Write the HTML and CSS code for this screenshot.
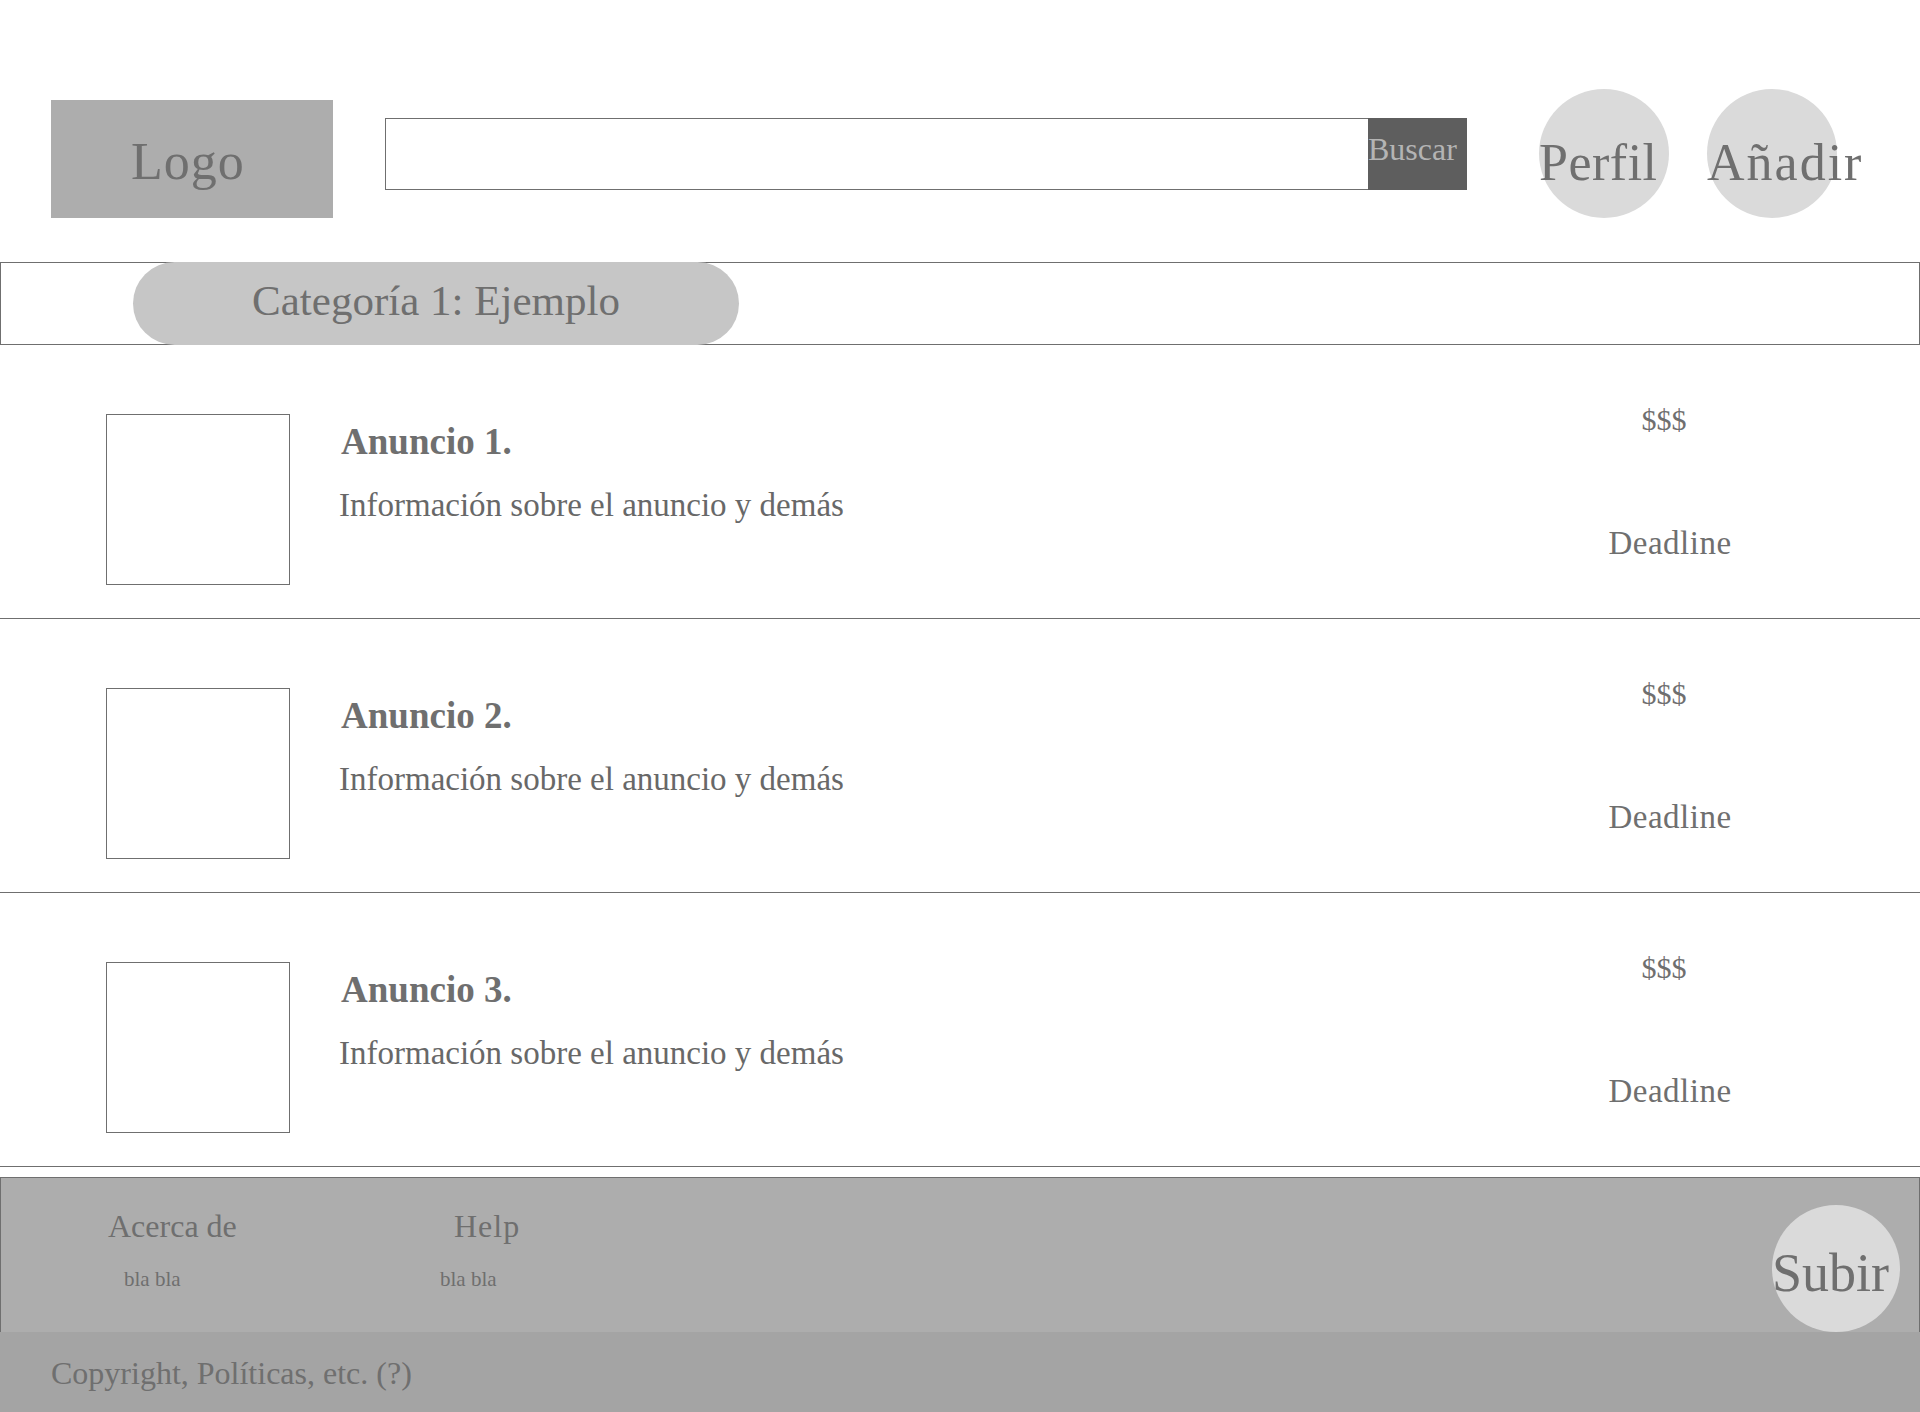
FILE: index.html
```html
<!DOCTYPE html>
<html lang="es">
<head>
<meta charset="utf-8">
<title>Anuncios</title>
<link rel="stylesheet" href="styles.css">
</head>
<body>
<header class="header">
  <div class="logo">Logo</div>
  <form class="search">
    <div class="search-field"></div>
    <div class="search-btn">Buscar</div>
  </form>
  <div class="round round-perfil"><span>Perfil</span></div>
  <div class="round round-add"><span>Añadir</span></div>
</header>

<nav class="catbar">
  <div class="cat-pill">Categoría 1: Ejemplo</div>
</nav>

<main class="list">
  <div class="item">
    <div class="thumb"></div>
    <div class="info">
      <div class="title">Anuncio 1.</div>
      <div class="desc">Información sobre el anuncio y demás</div>
    </div>
    <div class="meta">
      <div class="price">$$$</div>
      <div class="deadline">Deadline</div>
    </div>
  </div>
  <div class="item">
    <div class="thumb"></div>
    <div class="info">
      <div class="title">Anuncio 2.</div>
      <div class="desc">Información sobre el anuncio y demás</div>
    </div>
    <div class="meta">
      <div class="price">$$$</div>
      <div class="deadline">Deadline</div>
    </div>
  </div>
  <div class="item">
    <div class="thumb"></div>
    <div class="info">
      <div class="title">Anuncio 3.</div>
      <div class="desc">Información sobre el anuncio y demás</div>
    </div>
    <div class="meta">
      <div class="price">$$$</div>
      <div class="deadline">Deadline</div>
    </div>
  </div>
</main>

<footer class="footer">
  <div class="footer-main">
    <div class="fcol fcol-about">
      <div class="fhead">Acerca de</div>
      <div class="fsub">bla bla</div>
    </div>
    <div class="fcol fcol-help">
      <div class="fhead">Help</div>
      <div class="fsub">bla bla</div>
    </div>
    <div class="round round-up"><span>Subir</span></div>
  </div>
  <div class="copyright">Copyright, Políticas, etc. (?)</div>
</footer>
</body>
</html>
```

FILE: styles.css
```css
* { box-sizing: border-box; }

html, body {
  margin: 0;
  padding: 0;
  background: #ffffff;
}

body {
  width: 1920px;
  font-family: "Liberation Serif", "Times New Roman", serif;
  color: #6f6f6f;
}

/* ---------- header ---------- */
.header {
  display: flex;
  align-items: flex-start;
  height: 262px;
}

.logo {
  margin-left: 51px;
  margin-top: 100px;
  width: 282px;
  height: 118px;
  background: #adadad;
  display: flex;
  align-items: center;
  justify-content: center;
  font-size: 52px;
  line-height: 1;
  padding-top: 6px;
  padding-right: 8px;
  letter-spacing: 1px;
}

.search {
  display: flex;
  margin: 118px 0 0 52px;
}

.search-field {
  width: 983px;
  height: 72px;
  border: 1px solid #6f6f6f;
  border-right: none;
  background: #fff;
}

.search-btn {
  width: 99px;
  height: 72px;
  background: #5e5e5e;
  color: #b4b4b4;
  font-size: 32px;
  line-height: 1;
  padding-top: 15px;
  white-space: nowrap;
}

.round {
  width: 130px;
  height: 129px;
  border-radius: 50%;
  background: #dadada;
  white-space: nowrap;
  font-size: 52px;
  line-height: 1;
  padding-top: 48px;
}

.round-perfil {
  margin: 89px 0 0 72px;
  letter-spacing: 0.5px;
}

.round-add {
  margin: 89px 0 0 38px;
  letter-spacing: 2px;
}

/* ---------- category bar ---------- */
.catbar {
  height: 83px;
  border: 1px solid #6f6f6f;
  position: relative;
}

.cat-pill {
  position: absolute;
  left: 132px;
  top: -1px;
  width: 606px;
  height: 83px;
  border-radius: 42px;
  background: #c6c6c6;
  display: flex;
  align-items: center;
  justify-content: center;
  font-size: 43px;
  line-height: 1;
  padding-bottom: 6px;
}

/* ---------- listings ---------- */
.item {
  display: flex;
  align-items: flex-start;
  height: 274px;
  border-bottom: 1px solid #6f6f6f;
}

.thumb {
  margin: 69px 0 0 106px;
  width: 184px;
  height: 171px;
  border: 1px solid #6f6f6f;
  flex: none;
}

.info {
  flex: 1;
  margin-left: 49px;
  padding-top: 78px;
}

.title {
  font-weight: bold;
  font-size: 37px;
  line-height: 1;
  padding-left: 2px;
}

.desc {
  font-size: 33px;
  line-height: 1;
  margin-top: 29px;
  color: #686868;
}

.meta {
  width: 200px;
  margin-right: 150px;
  text-align: center;
  padding-top: 60px;
  font-size: 30px;
  line-height: 1;
}

.price {
  padding-right: 12px;
}

.deadline {
  font-size: 33px;
  margin-top: 92px;
  letter-spacing: 0.5px;
}

/* ---------- footer ---------- */
.footer {
  margin-top: 10px;
}

.footer-main {
  display: flex;
  align-items: flex-start;
  height: 155px;
  background: #adadad;
  border: 1px solid #6f6f6f;
  border-bottom: none;
}

.fcol {
  padding-top: 32px;
}

.fhead {
  font-size: 32px;
  line-height: 1;
}

.fsub {
  font-size: 21px;
  line-height: 1;
  margin-top: 27px;
}

.fcol-about {
  margin-left: 107px;
  width: 332px;
}

.fcol-about .fsub {
  padding-left: 16px;
}

.fcol-help .fhead {
  padding-left: 14px;
  letter-spacing: 1px;
}

.round-up {
  margin: auto 19px 0 auto;
  width: 128px;
  height: 127px;
  font-size: 54px;
  padding-top: 41px;
}

.copyright {
  height: 80px;
  background: #a4a4a4;
  font-size: 32px;
  line-height: 1;
  padding: 25px 0 0 51px;
}
```
